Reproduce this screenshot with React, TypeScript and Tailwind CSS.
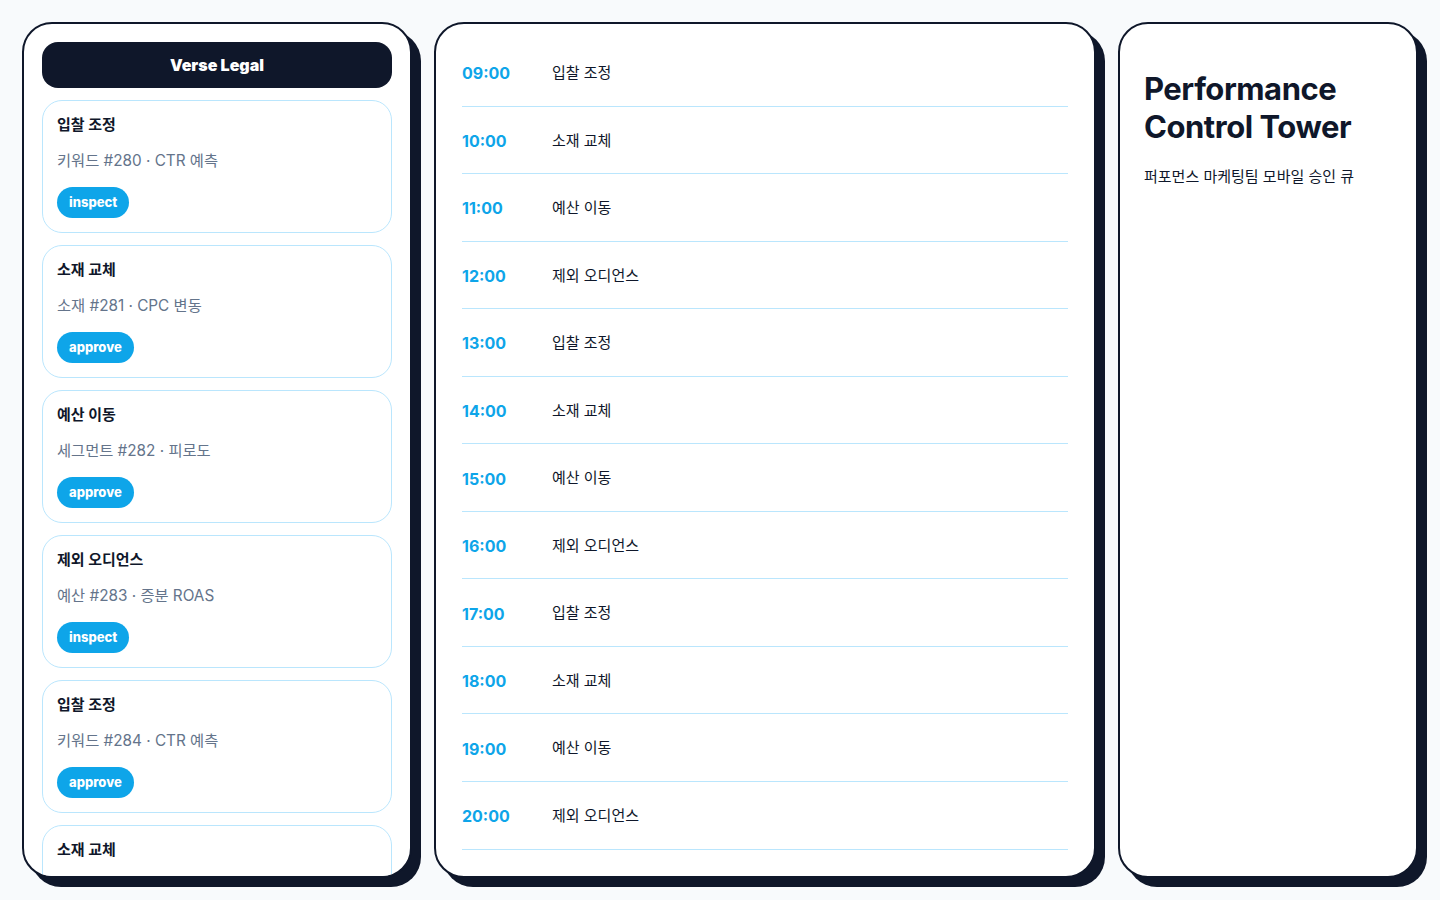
const FONT = 'font-["Inter","Noto_Sans_CJK_KR",sans-serif]'

const kinds = ['입찰 조정', '소재 교체', '예산 이동', '제외 오디언스']
const targets = ['키워드', '소재', '세그먼트', '예산']
const signals = ['CTR 예측', 'CPC 변동', '피로도', '증분 ROAS']

const queue = Array.from({ length: 6 }, (_, i) => ({
  id: 280 + i,
  title: kinds[i % 4],
  detail: `${targets[i % 4]} #${280 + i} · ${signals[i % 4]}`,
  action: i % 3 === 0 ? 'inspect' : 'approve',
}))

const schedule = Array.from({ length: 12 }, (_, i) => ({
  time: `${String(9 + i).padStart(2, '0')}:00`,
  label: kinds[i % 4],
}))

function QueueCard({ title, detail, action }: { title: string; detail: string; action: string }) {
  return (
    <article className="shrink-0 rounded-[20px] border border-[#bae6fd] bg-white p-[14px]">
      <div className="flex flex-col items-start gap-4">
        <h3 className="text-[15px] leading-5 font-bold text-[#0f172a]">{title}</h3>
        <p className="text-[15.3px] leading-5 text-[#64748b]">{detail}</p>
        <button className="h-[31px] rounded-full bg-[#0ea5e9] px-3 text-[13px] font-extrabold text-white">
          {action}
        </button>
      </div>
    </article>
  )
}

export default function App() {
  return (
    <div
      className={`${FONT} grid h-screen grid-cols-[390px_662px_1fr] gap-[22px] overflow-hidden bg-[#f8fafc] p-[22px]`}
    >
      <section className="flex h-full flex-col gap-3 overflow-hidden rounded-[30px] border-2 border-[#0f172a] bg-white p-[18px] shadow-[9px_9px_0_#0f172a]">
        <header className="flex h-[46px] shrink-0 items-center justify-center rounded-2xl bg-[#0f172a] text-[16px] font-black text-white">
          Verse Legal
        </header>
        {queue.map((item) => (
          <QueueCard key={item.id} title={item.title} detail={item.detail} action={item.action} />
        ))}
      </section>

      <section className="h-full overflow-hidden rounded-[30px] border-2 border-[#0f172a] bg-white px-[26px] pt-[15px] shadow-[9px_9px_0_#0f172a]">
        {schedule.map((row) => (
          <div key={row.time} className="flex h-[67.55px] items-center border-b border-[#bae6fd] pt-[2px]">
            <span className="w-[90px] text-[16px] font-bold text-[#0ea5e9]">{row.time}</span>
            <span className="text-[15px] text-[#0f172a]">{row.label}</span>
          </div>
        ))}
      </section>

      <section className="h-full overflow-hidden rounded-[30px] border-2 border-[#0f172a] bg-white px-6 pt-[46px] shadow-[9px_9px_0_#0f172a]">
        <h1 className="text-[31px] leading-[38px] font-bold tracking-[-0.015em] text-[#0f172a]">
          Performance Control Tower
        </h1>
        <p className="mt-5 text-[15px] leading-[22px] text-[#0f172a]">퍼포먼스 마케팅팀 모바일 승인 큐</p>
      </section>
    </div>
  )
}
